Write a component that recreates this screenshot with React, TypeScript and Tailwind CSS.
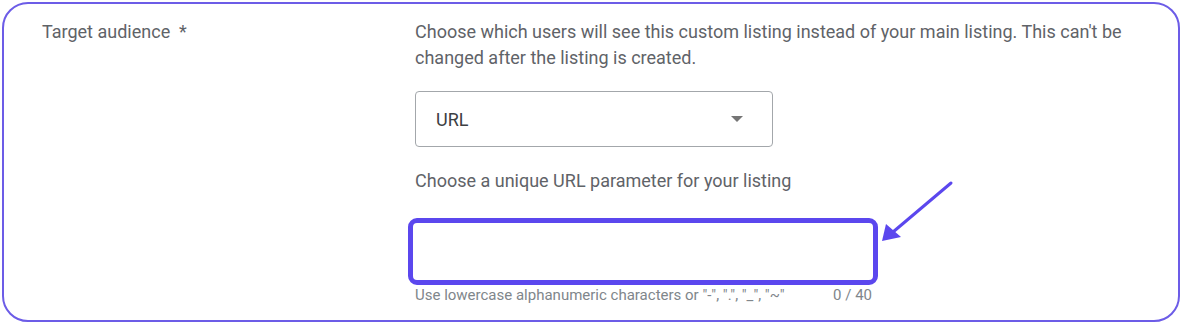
import React from 'react';

const PURPLE = '#5b47ee';

export default function App() {
    return (
        <div className="w-[1182px] h-[324px] bg-white p-[2px] font-['Roboto',sans-serif] relative">
            <div className="h-[320px] border-2 border-[#6c5ce7] rounded-[26px] flex pt-[15px] pl-[38px]">
                {/* Label */}
                <div className="w-[373px] text-[18px] leading-[26px] text-[#5f6368]">
                    Target audience&nbsp; *
                </div>

                {/* Field */}
                <div className="w-[722px] flex flex-col text-[#5f6368]">
                    <p className="text-[18px] leading-[26px]">
                        Choose which users will see this custom listing instead of your main listing. This can't be changed after the listing is created.
                    </p>

                    <div className="mt-[20px] w-[358px] h-[56px] border border-[#a3a7ab] rounded-[4px] flex items-center justify-between pl-[20px] pr-[29px]">
                        <span className="text-[18px] text-[#3c4043]">URL</span>
                        <span className="w-0 h-0 border-l-[6px] border-r-[6px] border-t-[6px] border-l-transparent border-r-transparent border-t-[#757575]" />
                    </div>

                    <p className="mt-[21px] text-[18px] leading-[26px]">
                        Choose a unique URL parameter for your listing
                    </p>

                    <div className="mt-[24px] -ml-[7px] w-[470px] h-[67px] border-[5px] border-[#5b47ee] rounded-[9px]" />

                    <div className="mt-[1px] w-[457px] flex justify-between text-[15px] leading-[18px] text-[#80868b]">
                        <span>Use lowercase alphanumeric characters or "-", ".", "_", "~"</span>
                        <span>0 / 40</span>
                    </div>
                </div>
            </div>

            {/* Annotation arrow */}
            <svg className="absolute left-[870px] top-[175px]" width="90" height="75" viewBox="870 175 90 75">
                <line x1="951" y1="183" x2="893" y2="232" stroke={PURPLE} strokeWidth="3" strokeLinecap="round" />
                <polygon points="882,241 886,224 901,237" fill={PURPLE} />
            </svg>
        </div>
    );
}
